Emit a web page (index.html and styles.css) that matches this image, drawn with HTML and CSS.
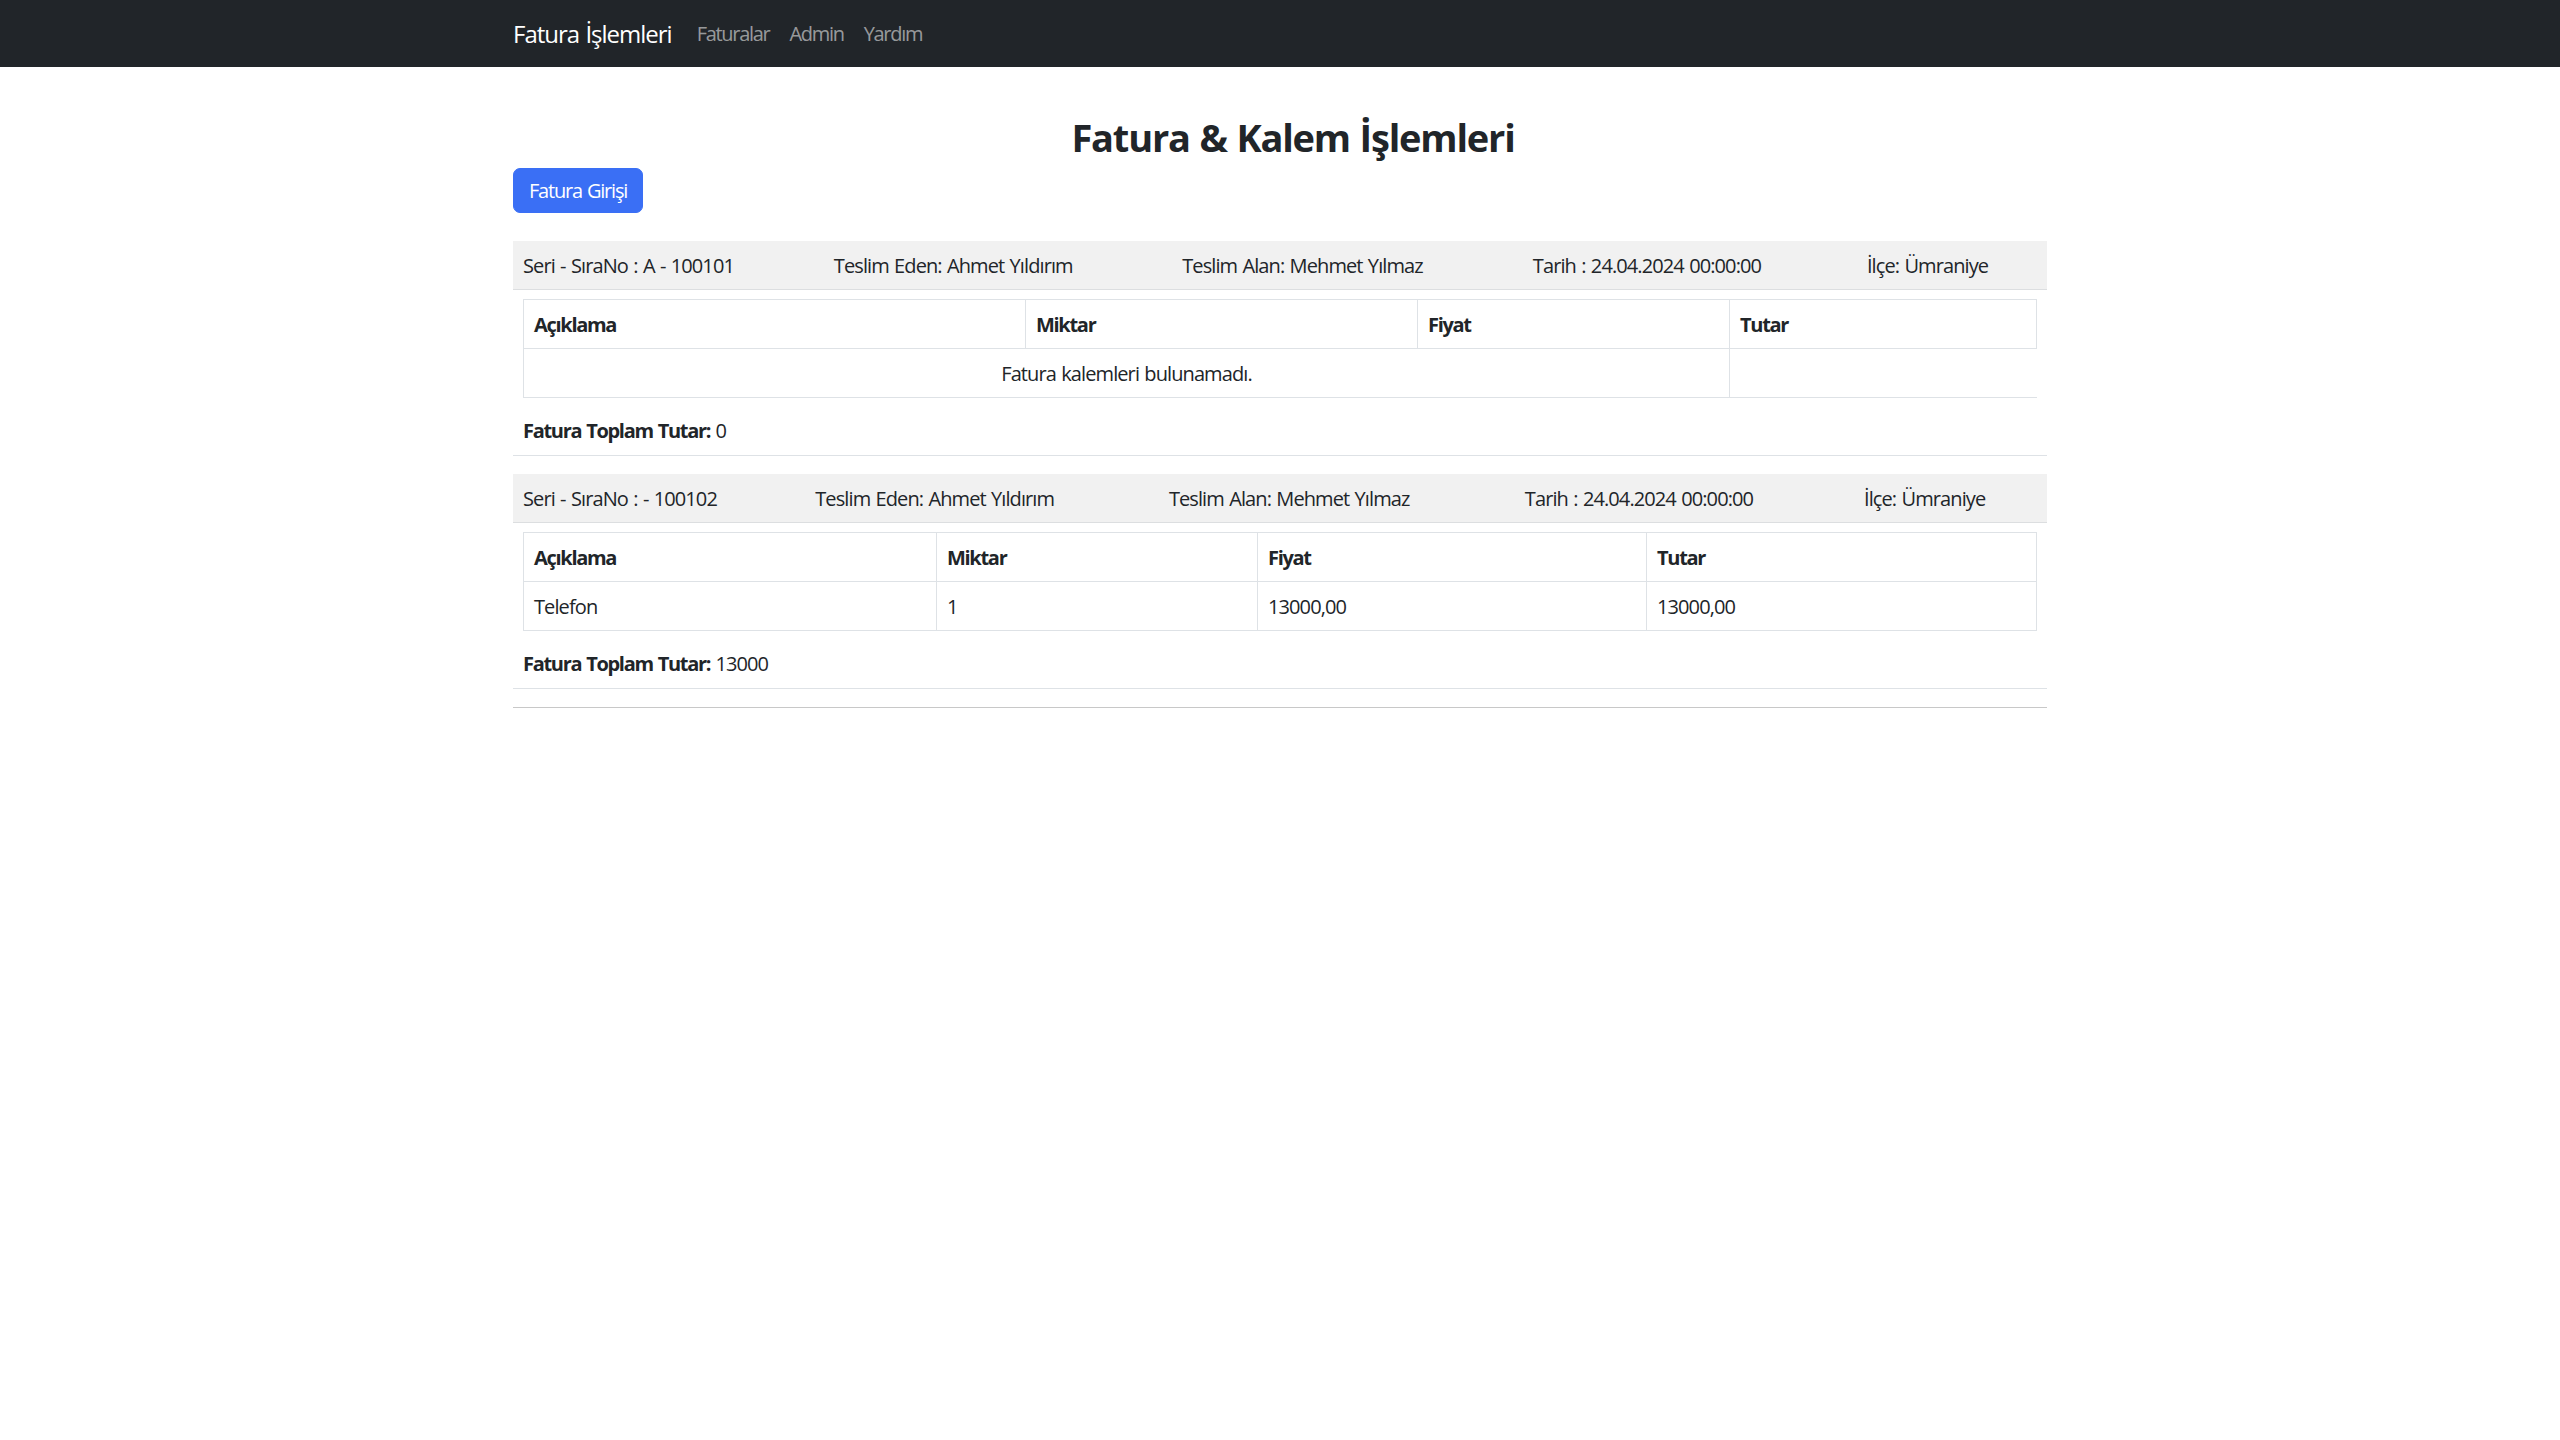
FILE: index.html
```html
<!DOCTYPE html>
<html lang="tr">
<head>
<meta charset="utf-8">
<title>Fatura &amp; Kalem İşlemleri</title>
<link rel="stylesheet" href="styles.css">
</head>
<body>
<nav class="navbar">
  <div class="nav-inner">
    <a class="brand" href="#">Fatura İşlemleri</a>
    <ul class="nav-links">
      <li><a href="#">Faturalar</a></li>
      <li><a href="#">Admin</a></li>
      <li><a href="#">Yardım</a></li>
    </ul>
  </div>
</nav>

<main class="container">
  <h1 class="page-title">Fatura &amp; Kalem İşlemleri</h1>
  <a class="btn-primary" href="#">Fatura Girişi</a>

  <section class="invoice invoice-first">
    <table class="invoice-head">
      <tr>
        <td>Seri - SıraNo : A - 100101</td>
        <td>Teslim Eden: Ahmet Yıldırım</td>
        <td>Teslim Alan: Mehmet Yılmaz</td>
        <td>Tarih : 24.04.2024 00:00:00</td>
        <td>İlçe: Ümraniye</td>
      </tr>
    </table>
    <div class="invoice-body">
      <table class="items items-a">
        <colgroup><col><col><col><col></colgroup>
        <thead>
          <tr><th>Açıklama</th><th>Miktar</th><th>Fiyat</th><th>Tutar</th></tr>
        </thead>
        <tbody>
          <tr><td colspan="3" class="empty">Fatura kalemleri bulunamadı.</td></tr>
        </tbody>
      </table>
      <p class="total"><strong>Fatura Toplam Tutar:</strong> 0</p>
    </div>
  </section>

  <section class="invoice">
    <table class="invoice-head">
      <tr>
        <td>Seri - SıraNo : - 100102</td>
        <td>Teslim Eden: Ahmet Yıldırım</td>
        <td>Teslim Alan: Mehmet Yılmaz</td>
        <td>Tarih : 24.04.2024 00:00:00</td>
        <td>İlçe: Ümraniye</td>
      </tr>
    </table>
    <div class="invoice-body">
      <table class="items items-b">
        <colgroup><col><col><col><col></colgroup>
        <thead>
          <tr><th>Açıklama</th><th>Miktar</th><th>Fiyat</th><th>Tutar</th></tr>
        </thead>
        <tbody>
          <tr><td>Telefon</td><td>1</td><td>13000,00</td><td>13000,00</td></tr>
        </tbody>
      </table>
      <p class="total"><strong>Fatura Toplam Tutar:</strong> 13000</p>
    </div>
  </section>

  <hr class="divider">
</main>
</body>
</html>
```

FILE: styles.css
```css
* { box-sizing: border-box; }

html, body {
  margin: 0;
  padding: 0;
  background: #fff;
}

body {
  font-family: "Open Sans", "Noto Sans", "Liberation Sans", sans-serif;
  font-size: 20px;
  line-height: 1.5;
  color: #212529;
  letter-spacing: -0.9px;
  word-spacing: 1px;
}

/* ---------- navbar ---------- */
.navbar {
  background: #212529;
  height: 67px;
  display: flex;
  align-items: center;
}

.nav-inner {
  width: 1534px;
  margin: 0 auto;
  display: flex;
  align-items: center;
}

.brand {
  color: #fff;
  text-decoration: none;
  font-size: 24px;
  letter-spacing: -1px;
  margin-right: 15px;
}

.nav-links {
  list-style: none;
  margin: 0;
  padding: 0;
  display: flex;
}

.nav-links a {
  display: block;
  padding: 0 10px;
  color: rgba(255, 255, 255, 0.55);
  text-decoration: none;
  font-size: 20px;
  letter-spacing: -1.3px;
}

/* ---------- main ---------- */
.container {
  width: 1534px;
  margin: 0 auto;
}

.page-title {
  margin: 46px 0 7px;
  padding-left: 26px;
  font-size: 38px;
  line-height: 48px;
  font-weight: 700;
  text-align: center;
  letter-spacing: -1.2px;
}

.btn-primary {
  display: inline-block;
  background: #3a6ff5;
  border: 1px solid #3a6ff5;
  color: #fff;
  text-decoration: none;
  padding: 7px 15px;
  line-height: 29px;
  border-radius: 7px;
  letter-spacing: -1.2px;
}

/* ---------- invoice block ---------- */
.invoice {
  border-bottom: 1px solid #dee2e6;
  margin-bottom: 18px;
}

.invoice-first {
  margin-top: 28px;
}

.invoice-head {
  width: 100%;
  border-collapse: collapse;
  background: #f1f1f1;
  border-bottom: 1px solid #dcdee0;
}

.invoice-head td {
  padding: 10px 10px 8px;
  line-height: 30px;
  white-space: nowrap;
}

.invoice-body {
  padding: 9px 10px 9px;
}

.items {
  width: 100%;
  border-collapse: collapse;
  table-layout: fixed;
}

.items tr {
  border-top: 1px solid #dee2e6;
  border-bottom: 1px solid #dee2e6;
}

.items th,
.items td {
  border-left: 1px solid #dee2e6;
  border-right: 1px solid #dee2e6;
  padding: 10px 10px 8px;
  line-height: 30px;
  text-align: left;
  vertical-align: top;
}

.items th {
  font-weight: 700;
  letter-spacing: -1.3px;
}

.items td.empty { text-align: center; }

.items-a col:nth-child(1) { width: 502px; }
.items-a col:nth-child(2) { width: 392px; }
.items-a col:nth-child(3) { width: 312px; }
.items-a col:nth-child(4) { width: 307px; }

.items-b col:nth-child(1) { width: 413px; }
.items-b col:nth-child(2) { width: 321px; }
.items-b col:nth-child(3) { width: 389px; }
.items-b col:nth-child(4) { width: 390px; }

.total {
  margin: 18px 0 0;
  line-height: 30px;
}

.total strong {
  font-weight: 700;
  letter-spacing: -1.3px;
}

.divider {
  margin: 0;
  border: 0;
  border-top: 1px solid #c8c8c8;
}
```
